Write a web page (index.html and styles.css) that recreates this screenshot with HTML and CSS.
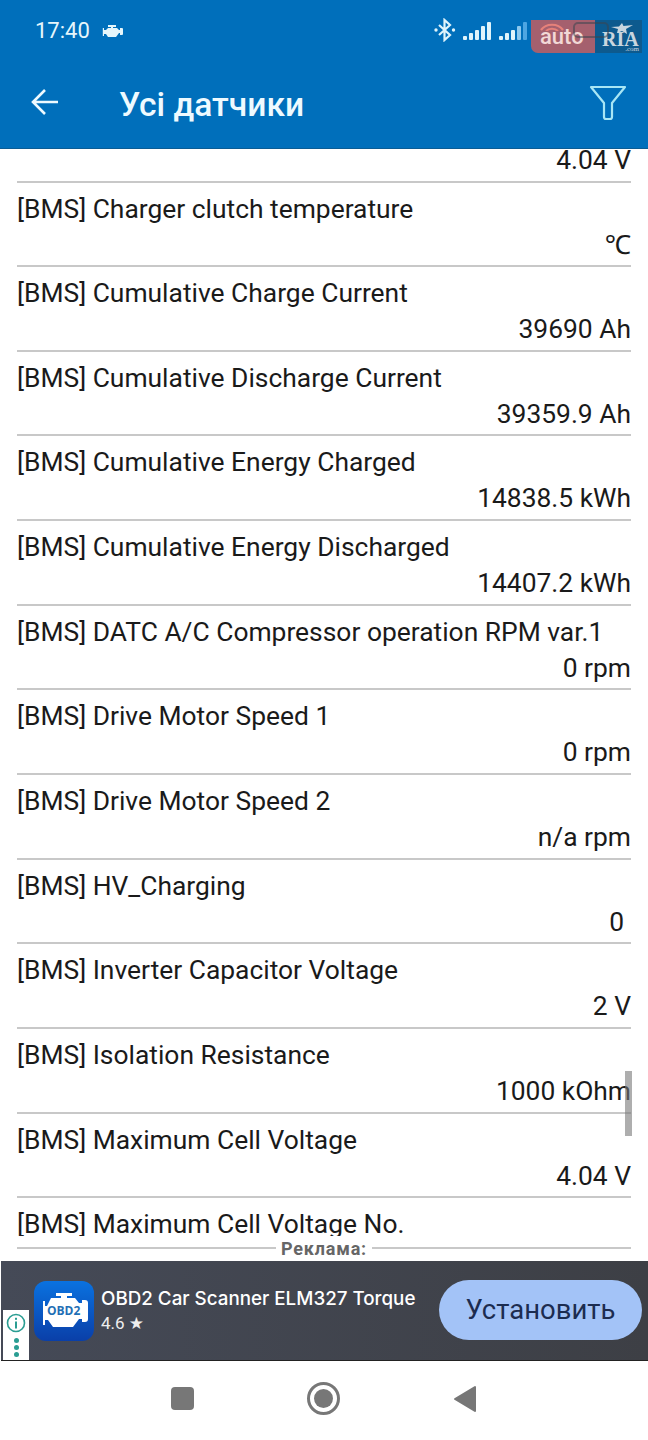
FILE: index.html
```html
<!DOCTYPE html>
<html>
<head lang="en">
    <meta charset="UTF-8">
    <title>Усі датчики</title>
    <link rel="stylesheet" href="styles.css">
</head>
<body>
<div class="phone">
    <div class="top">
        <div class="status">
            <span class="time">17:40</span>
            <svg class="engine" width="22" height="14" viewBox="0 0 22 14"><path fill="#e6f6fb" d="M6 1h8v2h-3v1h4l2 2h1V4h2a1 1 0 0 1 1 1v5a1 1 0 0 1-1 1h-2V9h-1l-3 4H6L4 10H2V12H0.8V4H2v2h2l2-2h3V3H6z"/></svg>
            <span class="status-right">
                <svg width="22" height="24" viewBox="0 0 22 24"><path fill="none" stroke="#dff4fb" stroke-width="2.2" d="M5 7l11 10-5.500 5V2L16 7 5 17"/><circle cx="2" cy="12" r="1.700" fill="#dff4fb"/><circle cx="19.500" cy="12" r="1.700" fill="#dff4fb"/></svg>
                <svg class="signal" width="29" height="20" viewBox="0 0 29 20"><g fill="#dff4fb"><rect x="0" y="15" width="4" height="4" rx="1"/><rect x="6" y="12" width="4" height="7" rx="1"/><rect x="12" y="9" width="4" height="10" rx="1"/><rect x="18" y="5" width="4" height="14" rx="1"/><rect x="24" y="1" width="4" height="18" rx="1"/></g></svg>
                <svg class="signal" width="29" height="20" viewBox="0 0 29 20"><g fill="#dff4fb"><rect x="0" y="15" width="4" height="4" rx="1"/><rect x="6" y="12" width="4" height="7" rx="1"/><rect x="12" y="9" width="4" height="10" rx="1"/></g><rect x="18" y="5" width="4" height="14" rx="1" fill="#8cc8ee"/><rect x="24" y="1" width="4" height="18" rx="1" fill="#4ea6e2"/></svg>
            </span>
        </div>
        <div class="toolbar">
            <svg class="back" width="28" height="28" viewBox="0 0 28 28"><path fill="none" stroke="#eefaff" stroke-width="2.600" d="M27 14H3M14 2L2 14l12 12"/></svg>
            <h1 class="title">Усі датчики</h1>
            <svg class="filter" width="38" height="36" viewBox="0 0 38 36"><path fill="none" stroke="#a8e6f5" stroke-width="2.200" stroke-linejoin="round" d="M2 2h34L23 18v14a2 2 0 0 1-2 2h-4a2 2 0 0 1-2-2V18z"/></svg>
        </div>
    </div>

    <div class="list">
        <div class="row row-cut"><div class="value">4.04 V</div></div>
        <div class="row"><div class="name">[BMS] Charger clutch temperature</div><div class="value">℃</div></div>
        <div class="row"><div class="name">[BMS] Cumulative Charge Current</div><div class="value">39690 Ah</div></div>
        <div class="row"><div class="name">[BMS] Cumulative Discharge Current</div><div class="value">39359.9 Ah</div></div>
        <div class="row"><div class="name">[BMS] Cumulative Energy Charged</div><div class="value">14838.5 kWh</div></div>
        <div class="row"><div class="name">[BMS] Cumulative Energy Discharged</div><div class="value">14407.2 kWh</div></div>
        <div class="row"><div class="name">[BMS] DATC A/C Compressor operation RPM var.1</div><div class="value">0 rpm</div></div>
        <div class="row"><div class="name">[BMS] Drive Motor Speed 1</div><div class="value">0 rpm</div></div>
        <div class="row"><div class="name">[BMS] Drive Motor Speed 2</div><div class="value">n/a rpm</div></div>
        <div class="row"><div class="name">[BMS] HV_Charging</div><div class="value value-pad">0</div></div>
        <div class="row"><div class="name">[BMS] Inverter Capacitor Voltage</div><div class="value">2 V</div></div>
        <div class="row"><div class="name">[BMS] Isolation Resistance</div><div class="value">1000 kOhm</div></div>
        <div class="row"><div class="name">[BMS] Maximum Cell Voltage</div><div class="value">4.04 V</div></div>
        <div class="row"><div class="name">[BMS] Maximum Cell Voltage No.</div></div>
        <div class="scrollbar"></div>
    </div>

    <div class="ad-label"><span>Реклама:</span></div>
    <div class="ad">
        <div class="ad-info">
            <svg width="20" height="20" viewBox="0 0 20 20"><circle cx="10" cy="10" r="8.500" fill="none" stroke="#2a9d92" stroke-width="1.600"/><rect x="9" y="8.500" width="2" height="7" fill="#2a9d92"/><rect x="9" y="4.800" width="2" height="2" fill="#2a9d92"/></svg>
            <i></i><i></i><i></i>
        </div>
        <div class="app-icon">
            <svg width="50" height="38" viewBox="0 0 50 38"><path fill="#fff" d="M17 1h16v3h-5v2h8l4 5h3V8h3a3 3 0 0 1 3 3v16a3 3 0 0 1-3 3h-3v-3h-3l-6 8H14l-5-7H6v5H4V9h2v5h2l4-8h10V4h-5z"/></svg>
            <span class="app-icon-text">OBD2</span>
        </div>
        <div class="app-info">
            <div class="app-name">OBD2 Car Scanner ELM327 Torque</div>
            <div class="app-rate">4.6 <span class="star">★</span></div>
        </div>
        <div class="install">Установить</div>
    </div>

    <div class="nav">
        <span class="nav-square"></span>
        <span class="nav-circle"><b></b></span>
        <svg width="24" height="28" viewBox="0 0 24 28"><path fill="#777" stroke="#777" stroke-width="2" stroke-linejoin="round" d="M22 2v24L2 14z"/></svg>
    </div>

    <div class="watermark">
        <div class="wm-auto">
            <svg width="26" height="10" viewBox="0 0 26 10"><path fill="none" stroke="#e6817a" stroke-width="2.200" d="M2 9C7 2 19 2 24 9M7 10c3-3 9-3 12 0"/></svg>
            <span>auto</span>
        </div>
        <div class="wm-ria">
            <svg class="wm-star" width="22" height="11" viewBox="0 0 22 11"><path fill="#c9d6df" d="M0 4l8-.5L11 0l1.500 3L22 2l-7 4 1 5-5-3-5 2 1-4z"/></svg>
            <span class="wm-name">RIA</span>
            <span class="wm-com">.com</span>
        </div>
        <div class="wm-battery"></div>
    </div>
</div>
</body>
</html>
```

FILE: styles.css
```css
* {
    box-sizing: border-box;
}
body, h1 {
    margin: 0;
    padding: 0;
}
body {
    background: #fff;
    font-family: Roboto, "Noto Sans", sans-serif;
    overflow: hidden;
}
.phone {
    width: 648px;
    height: 1440px;
    position: relative;
    overflow: hidden;
    display: flex;
    flex-direction: column;
}

/* top blue part */
.top {
    height: 149px;
    flex: none;
    background: #006fbb;
    border-bottom: 1px solid #0a5c94;
    padding: 0 0 0 36px;
}
.status {
    height: 60px;
    display: flex;
    align-items: center;
    color: #e6f6fb;
}
.time {
    font-size: 22px;
    margin-right: 12px;
    margin-left: -1px;
}
.engine {
    margin-top: 1px;
}
.status-right {
    margin-left: auto;
    margin-right: 120px;
    display: flex;
    align-items: center;
    gap: 7px;
}
.signal {
    margin-top: 1px;
}
.toolbar {
    display: flex;
    align-items: center;
    height: 88px;
}
.back {
    margin-left: -5px;
    margin-top: -4px;
}
.title {
    font-size: 33.6px;
    font-weight: 500;
    color: #eefaff;
    margin-left: 60px;
    margin-top: 1px;
}
.filter {
    margin-left: auto;
    margin-right: 21px;
    margin-top: -2px;
}

/* list */
.list {
    height: 1087px;
    flex: none;
    overflow: hidden;
    position: relative;
    padding: 0 17px;
}
.row {
    height: 84.67px;
    border-bottom: 2px solid #c8c8c8;
    padding-top: 8px;
}
.row-cut {
    height: 33.500px;
    padding-top: 0;
}
.name, .value {
    font-size: 26.4px;
    line-height: 36px;
    color: #1a1a1a;
    white-space: nowrap;
}
.value {
    text-align: right;
}
.row-cut .value {
    line-height: 22px;
}
.value-pad {
    padding-right: 7px;
}
.scrollbar {
    position: absolute;
    left: 625px;
    top: 922px;
    width: 7px;
    height: 65px;
    background: rgba(120, 120, 120, 0.6);
}

/* ad */
.ad-label {
    height: 25px;
    flex: none;
    margin: 0 17px;
    text-align: center;
    position: relative;
    color: #666;
    font-size: 18px;
    font-weight: 700;
    letter-spacing: 0.8px;
    line-height: 25px;
}
.ad-label::before {
    content: "";
    position: absolute;
    left: 0;
    right: 0;
    top: 11px;
    border-top: 2px solid #c8c8c8;
}
.ad-label span {
    position: relative;
    background: #fff;
    padding: 0 5px;
}
.ad {
    height: 100px;
    flex: none;
    margin-left: 1px;
    background: linear-gradient(90deg, #454a57, #3d3f45);
    border-bottom: 1px solid #222;
    display: flex;
    align-items: center;
    position: relative;
}
.ad-info {
    position: absolute;
    left: 2px;
    bottom: 0;
    width: 26px;
    height: 50px;
    background: #fff;
    display: flex;
    flex-direction: column;
    align-items: center;
    padding-top: 3px;
    gap: 2px;
}
.ad-info i {
    width: 5px;
    height: 5px;
    border-radius: 50%;
    background: #2a9d92;
}
.ad-info svg {
    margin-bottom: 3px;
}
.app-icon {
    width: 60px;
    height: 60px;
    margin-left: 33px;
    border-radius: 12px;
    background: linear-gradient(180deg, #0a72e0, #0a3fa8);
    position: relative;
    display: flex;
    align-items: center;
    justify-content: center;
    flex: none;
}
.app-icon-text {
    position: absolute;
    left: 13px;
    top: 21px;
    font-size: 12px;
    font-weight: 700;
    color: #1f6fb5;
    font-family: "Open Sans", sans-serif;
}
.app-info {
    margin-left: 7px;
    color: #fff;
}
.app-name {
    font-family: Inter, Roboto, sans-serif;
    font-size: 18.8px;
    font-weight: 500;
    white-space: nowrap;
    line-height: 24px;
    margin-top: 1px;
}
.app-rate {
    font-size: 17px;
    line-height: 24px;
    color: #eee;
}
.star {
    font-family: "DejaVu Sans", sans-serif;
    font-size: 17px;
}
.install {
    position: absolute;
    left: 438px;
    top: 19px;
    width: 203px;
    height: 60px;
    border-radius: 30px;
    background: #a3c3f7;
    color: #1c2c50;
    font-size: 27.5px;
    text-align: center;
    line-height: 59px;
}

/* android nav */
.nav {
    flex: 1;
    display: flex;
    align-items: center;
    justify-content: center;
    gap: 113px;
    padding-bottom: 4px;
}
.nav-square {
    width: 23px;
    height: 23px;
    border-radius: 4px;
    background: #777;
}
.nav-circle {
    width: 33px;
    height: 33px;
    border-radius: 50%;
    border: 3px solid #777;
    display: flex;
    align-items: center;
    justify-content: center;
}
.nav-circle b {
    width: 19px;
    height: 19px;
    border-radius: 50%;
    background: #777;
}

/* auto.ria watermark over the status bar */
.watermark {
    position: absolute;
    left: 531px;
    top: 20px;
    width: 111px;
    height: 33px;
    display: flex;
}
.wm-auto {
    width: 64px;
    background: rgba(228, 90, 80, 0.72);
    border-radius: 0 0 0 7px;
    color: #f2d8d6;
    font-size: 22px;
    font-weight: 500;
    position: relative;
    padding: 4px 0 0 9px;
    line-height: 26px;
}
.wm-auto svg {
    position: absolute;
    left: 8px;
    top: 1px;
}
.wm-ria {
    width: 47px;
    background: #0d5a8e;
    position: relative;
    color: #c9d6df;
    font-family: "Liberation Serif", serif;
    font-weight: 700;
}
.wm-star {
    position: absolute;
    left: 16px;
    top: 3px;
}
.wm-name {
    position: absolute;
    left: 7px;
    top: 12px;
    font-size: 20px;
    line-height: 14px;
}
.wm-com {
    position: absolute;
    right: 3px;
    bottom: 0;
    font-size: 7px;
    line-height: 7px;
    font-weight: 400;
}
.wm-battery {
    position: absolute;
    left: 42px;
    top: 2px;
    width: 36px;
    height: 16px;
    border: 2px solid rgba(60, 70, 80, 0.55);
    border-radius: 5px;
}
```
